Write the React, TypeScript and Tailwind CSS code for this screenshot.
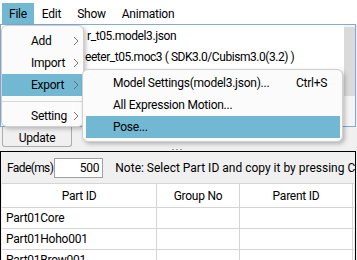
import React from "react";

const Chevron = () => (
  <svg width="6" height="10" viewBox="0 0 6 10" className="block shrink-0">
    <path d="M1 1 L5 5 L1 9" fill="none" stroke="#666" strokeWidth="0.9" />
  </svg>
);

export default function App() {
  const font = { fontFamily: 'Roboto, "Noto Sans", sans-serif' };
  return (
    <div
      className="relative w-[357px] h-[260px] overflow-hidden bg-[#f0f0f0] text-[12px] text-black leading-none tracking-[-0.25px]"
      style={font}
    >
      {/* Menu bar */}
      <div className="h-[24px] bg-white flex items-end pl-[2px]">
        <div className="h-[21px] px-[7px] flex items-center bg-[#73b8d3]">File</div>
        <div className="h-[21px] px-[8px] flex items-center">Edit</div>
        <div className="h-[21px] px-[8px] flex items-center">Show</div>
        <div className="h-[21px] px-[8px] flex items-center">Animation</div>
      </div>

      {/* Upper area */}
      <div className="flex flex-col">
        <div className="h-[103px] mr-[1px] border border-[#86a8d6] bg-white flex">
          <div className="flex-1 flex flex-col pt-[5px] gap-[9px] whitespace-nowrap overflow-hidden">
            <div className="pl-[86px] h-[12px] flex items-center tracking-[-0.4px]">r_t05.model3.json</div>
            <div className="pl-[84px] h-[12px] flex items-center tracking-[-0.45px]">eeter_t05.moc3 ( SDK3.0/Cubism3.0(3.2) )</div>
          </div>
          <div className="w-[11px] flex flex-col bg-[#f4f4f4]">
            <div className="h-[69px] mt-[2px] bg-[#dadada]" />
          </div>
        </div>
        <div className="h-[20px] flex items-start">
          <div className="w-[70px] h-[20px] ml-[2px] pt-[2px] border border-t-0 border-[#adadad] rounded-b-[3px] flex items-center justify-center">
            Update
          </div>
        </div>
        <div className="h-[4px] flex justify-center items-center gap-[2px] pr-[4px]">
          <div className="w-[2px] h-[1px] bg-[#9a9a9a]" />
          <div className="w-[2px] h-[1px] bg-[#9a9a9a]" />
          <div className="w-[2px] h-[1px] bg-[#9a9a9a]" />
        </div>
      </div>

      {/* Lower panel */}
      <div className="mr-[1px] border-t border-l border-r border-black bg-[#f0f0f0] h-[120px]">
        <div className="h-[31px] flex items-center pl-[6px] whitespace-nowrap overflow-hidden">
          <span className="shrink-0 tracking-[-0.6px]">Fade(ms)</span>
          <div className="shrink-0 ml-[1px] w-[49px] h-[20px] bg-white border border-[#a0a0a0] flex items-center justify-end pr-[3px]">500</div>
          <span className="shrink-0 ml-[12px] tracking-[0px]">Note: Select Part ID and copy it by pressing Ctrl+C</span>
        </div>
        <div className="ml-[1px] mr-[1px] bg-white border-t border-[#d5d5d5]">
          <div className="grid grid-cols-[155px_83px_113px] h-[24px] border-b border-[#d5d5d5]">
            <div className="border-r border-[#d5d5d5] flex items-center justify-center">Part ID</div>
            <div className="border-r border-[#d5d5d5] flex items-center justify-center">Group No</div>
            <div className="border-r border-[#d5d5d5] flex items-center justify-center">Parent ID</div>
          </div>
          {["Part01Core", "Part01Hoho001", "Part01Brow001"].map((p) => (
            <div key={p} className="grid grid-cols-[155px_83px_113px] h-[21px] border-b border-[#d5d5d5]">
              <div className="border-r border-[#d5d5d5] flex items-center pl-[4px]">{p}</div>
              <div className="border-r border-[#d5d5d5]" />
              <div className="border-r border-[#d5d5d5]" />
            </div>
          ))}
        </div>
      </div>

      {/* File dropdown */}
      <div className="absolute left-[1px] top-[25px] w-[83px] h-[102px] overflow-hidden bg-[#fbfbfb] border border-[#cfcfcf] rounded-[6px] shadow-[2px_2px_4px_rgba(0,0,0,0.25)] pt-[4px]">
        {[
          { t: "Add", hi: false },
          { t: "Import", hi: false },
          { t: "Export", hi: true },
        ].map((it) => (
          <div
            key={it.t}
            className={`h-[22px] flex items-center pl-[29px] pr-[4px] ${it.hi ? "bg-[#73b8d3]" : ""}`}
          >
            <span className="flex-1">{it.t}</span>
            <Chevron />
          </div>
        ))}
        <div className="h-[10px] flex items-center">
          <div className="w-full h-px bg-[#d8d8d8]" />
        </div>
        <div className="h-[20px] flex items-center pl-[29px] pr-[4px]">
          <span className="flex-1">Setting</span>
          <Chevron />
        </div>
      </div>

      {/* Export submenu */}
      <div className="absolute left-[82px] top-[69px] w-[261px] h-[73px] bg-[#fbfbfb] border border-[#cfcfcf] rounded-[6px] shadow-[2px_2px_4px_rgba(0,0,0,0.25)] pt-[2px] pl-[3px] pr-[2px]">
        <div className="h-[22px] flex items-center pl-[27px] whitespace-nowrap">
          <span className="w-[183px]">Model Settings(model3.json)...</span>
          <span>Ctrl+S</span>
        </div>
        <div className="h-[22px] flex items-center pl-[27px]">All Expression Motion...</div>
        <div className="h-[22px] flex items-center pl-[27px] bg-[#73b8d3]">Pose...</div>
      </div>
    </div>
  );
}
